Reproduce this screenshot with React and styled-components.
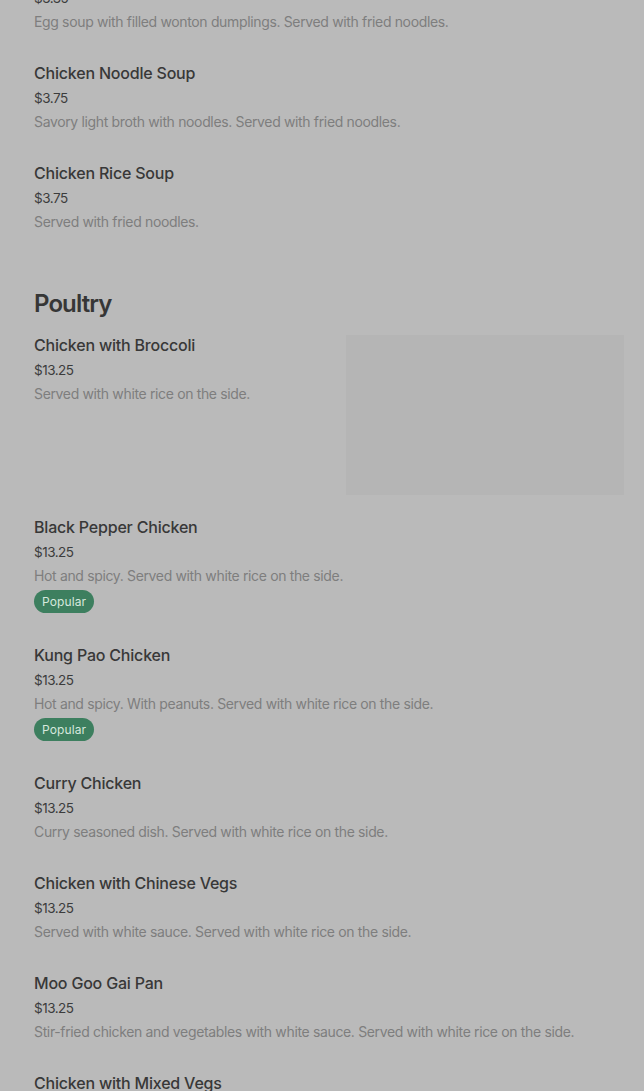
import React from "react";
import styled, { createGlobalStyle } from "styled-components";

const Global = createGlobalStyle`
  html, body {
    margin: 0;
    padding: 0;
    background: #bababa;
    font-family: Inter, "Noto Sans", sans-serif;
    overflow: hidden;
  }
`;

const Page = styled.div`
  width: 644px;
  height: 1091px;
  overflow: hidden;
  background: #bababa;
`;

const Scroller = styled.div`
  margin-top: -39px;
  padding: 0 20px 0 34px;
`;

const Section = styled.section`
  padding-bottom: 27px;
`;

const SectionTitle = styled.h2`
  margin: 0 0 15px;
  font-size: 24px;
  line-height: 32px;
  font-weight: 600;
  letter-spacing: -0.9px;
  color: #363636;
`;

const Item = styled.div`
  display: flex;
  justify-content: space-between;
  align-items: flex-start;
  padding-bottom: ${p => (p.$image ? "20px" : p.$badge ? "30px" : "27px")};
`;

const Info = styled.div`
  display: flex;
  flex-direction: column;
  align-items: flex-start;
  margin-top: ${p => (p.$image ? "-2px" : "0")};
`;

const Name = styled.div`
  font-size: 16px;
  line-height: 24px;
  font-weight: 500;
  letter-spacing: -0.2px;
  color: #383838;
`;

const Price = styled.div`
  margin-top: 1px;
  font-size: 13.5px;
  line-height: 24px;
  color: #3c3c3c;
  letter-spacing: -0.5px;
`;

const Desc = styled.div`
  font-size: 14px;
  line-height: 24px;
  color: #7e7e7e;
  letter-spacing: -0.35px;
`;

const Badge = styled.span`
  margin-top: 2px;
  display: inline-flex;
  align-items: center;
  height: 23px;
  padding: 0 8px;
  border-radius: 12px;
  background: #3d7f5f;
  color: #d6e8dd;
  font-size: 12px;
  letter-spacing: 0.1px;
`;

const Thumb = styled.div`
  width: 278px;
  height: 160px;
  flex-shrink: 0;
  background: #b5b5b5;
`;

const soups = [
  { name: "Wonton Soup", price: "$3.35", desc: "Egg soup with filled wonton dumplings. Served with fried noodles." },
  { name: "Chicken Noodle Soup", price: "$3.75", desc: "Savory light broth with noodles. Served with fried noodles." },
  { name: "Chicken Rice Soup", price: "$3.75", desc: "Served with fried noodles." },
];

const poultry = [
  { name: "Chicken with Broccoli", price: "$13.25", desc: "Served with white rice on the side.", image: true },
  { name: "Black Pepper Chicken", price: "$13.25", desc: "Hot and spicy. Served with white rice on the side.", popular: true },
  { name: "Kung Pao Chicken", price: "$13.25", desc: "Hot and spicy. With peanuts. Served with white rice on the side.", popular: true },
  { name: "Curry Chicken", price: "$13.25", desc: "Curry seasoned dish. Served with white rice on the side." },
  { name: "Chicken with Chinese Vegs", price: "$13.25", desc: "Served with white sauce. Served with white rice on the side." },
  { name: "Moo Goo Gai Pan", price: "$13.25", desc: "Stir-fried chicken and vegetables with white sauce. Served with white rice on the side." },
  { name: "Chicken with Mixed Vegs", price: "$13.25", desc: "Served with white rice on the side." },
];

const MenuItem = ({ name, price, desc, popular, image }) => (
  <Item $image={image} $badge={popular}>
    <Info $image={image}>
      <Name>{name}</Name>
      <Price>{price}</Price>
      <Desc>{desc}</Desc>
      {popular && <Badge>Popular</Badge>}
    </Info>
    {image && <Thumb />}
  </Item>
);

export default function App() {
  return (
    <Page>
      <Global />
      <Scroller>
        <Section>
          {soups.map(s => <MenuItem key={s.name} {...s} />)}
        </Section>
        <Section>
          <SectionTitle>Poultry</SectionTitle>
          {poultry.map(s => <MenuItem key={s.name} {...s} />)}
        </Section>
      </Scroller>
    </Page>
  );
}
